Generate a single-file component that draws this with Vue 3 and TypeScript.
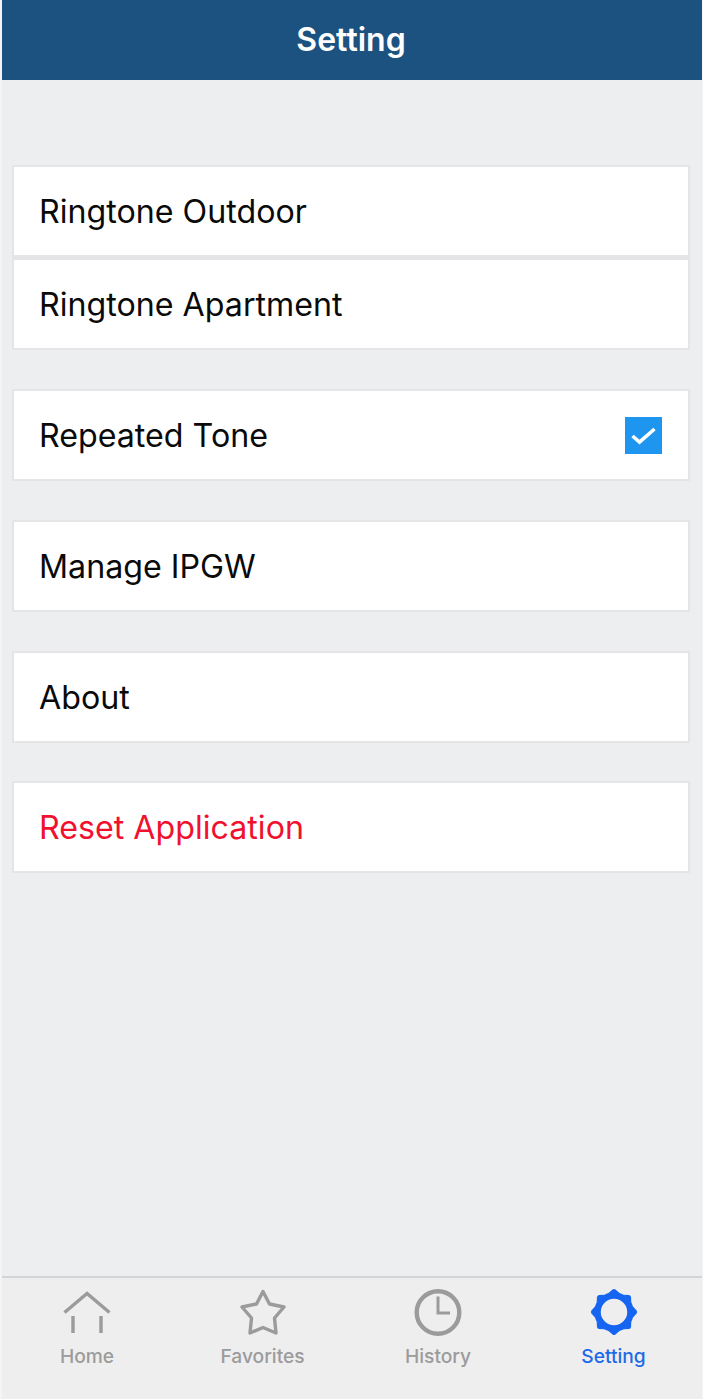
<script setup lang="ts">
const tabs = ['Home', 'Favorites', 'History', 'Setting']
const teeth = [0, 45, 90, 135, 180, 225, 270, 315]
</script>

<template>
  <div class="screen">
    <header class="bar">Setting</header>
    <main class="list">
      <section class="group">
        <div class="row">Ringtone Outdoor</div>
        <div class="row">Ringtone Apartment</div>
      </section>
      <section class="group">
        <div class="row">
          Repeated Tone
          <span class="check">
            <svg viewBox="0 0 37 37" width="37" height="37">
              <path d="M7.5 19 L14.5 25 L29.5 12" fill="none" stroke="#fff" stroke-width="3.6" />
            </svg>
          </span>
        </div>
      </section>
      <section class="group"><div class="row">Manage IPGW</div></section>
      <section class="group"><div class="row">About</div></section>
      <section class="group"><div class="row danger">Reset Application</div></section>
    </main>
    <nav class="tabs">
      <div v-for="tab in tabs" :key="tab" class="tab" :class="{ active: tab === 'Setting' }">
        <svg viewBox="0 0 50 50" width="50" height="50" class="icon">
          <g v-if="tab === 'Home'" fill="none" stroke="#9b9b9b" stroke-width="3.4">
            <path d="M2.5 25.5 L25 6.5 L47.5 25.5" />
            <path d="M11 29 V46 M39 29 V46" />
          </g>
          <path
            v-else-if="tab === 'Favorites'"
            d="M25 4.5 L31.5 17 L46 20 L36.5 31 L38 46 L25 40.5 L12 46 L13.5 31 L4 20 L18.5 17 Z"
            fill="none"
            stroke="#9b9b9b"
            stroke-width="3.4"
            stroke-linejoin="round"
          />
          <g v-else-if="tab === 'History'" fill="none" stroke="#9b9b9b">
            <circle cx="25" cy="25.5" r="21.3" stroke-width="4.4" />
            <path d="M25 9.5 V26 H37" stroke-width="3" />
          </g>
          <g v-else fill="#1565f0">
            <path
              v-for="angle in teeth"
              :key="angle"
              d="M19.5 6 L23.5 2.4 Q25 1.4 26.5 2.4 L30.5 6 Z"
              :transform="`rotate(${angle} 25 25)`"
            />
            <circle cx="25" cy="25" r="16.5" fill="#eeeeef" stroke="#1565f0" stroke-width="6.5" />
          </g>
        </svg>
        <span class="label">{{ tab }}</span>
      </div>
    </nav>
  </div>
</template>

<style>
body {
  background: #f4f4f6;
}
</style>

<style scoped>
.screen {
  width: 700px;
  height: 1399px;
  margin-left: 2px;
  display: flex;
  flex-direction: column;
  background: #edeef0;
  font-family: Inter, "Liberation Sans", sans-serif;
}
.bar {
  height: 80px;
  flex: none;
  padding-right: 2px;
  background: #1c5280;
  color: #fff;
  font-size: 32px;
  font-weight: 600;
  line-height: 79px;
  text-align: center;
  box-sizing: border-box;
}
.list {
  flex: 1;
  padding: 85px 12px 0 10px;
  display: flex;
  flex-direction: column;
  gap: 38.85px;
}
.group {
  display: flex;
  flex-direction: column;
  gap: 1px;
  background: #e4e4e6;
}
.row {
  height: 92px;
  box-sizing: border-box;
  background: #fff;
  border: 2px solid #e5e5e7;
  padding: 2px 26px 0 25px;
  display: flex;
  align-items: center;
  justify-content: space-between;
  font-size: 32.2px;
  line-height: 40px;
  color: #0a0a0a;
}
.danger {
  color: #f0112f;
}
.check {
  width: 37px;
  height: 37px;
  background: #1e96f0;
  display: block;
}
.check svg {
  display: block;
}
.tabs {
  height: 123px;
  flex: none;
  box-sizing: border-box;
  border-top: 2px solid #d4d4d6;
  padding: 0 28.5px 0 25px;
  display: flex;
  justify-content: space-between;
  background: #eeeeef;
}
.tab {
  width: 120px;
  display: flex;
  flex-direction: column;
  align-items: center;
  padding-top: 9px;
  color: #9b9b9b;
}
.icon {
  display: block;
}
.label {
  margin-top: 7px;
  font-size: 19.2px;
  font-weight: 500;
  line-height: 24px;
}
.active {
  color: #1e6ae6;
}
</style>
